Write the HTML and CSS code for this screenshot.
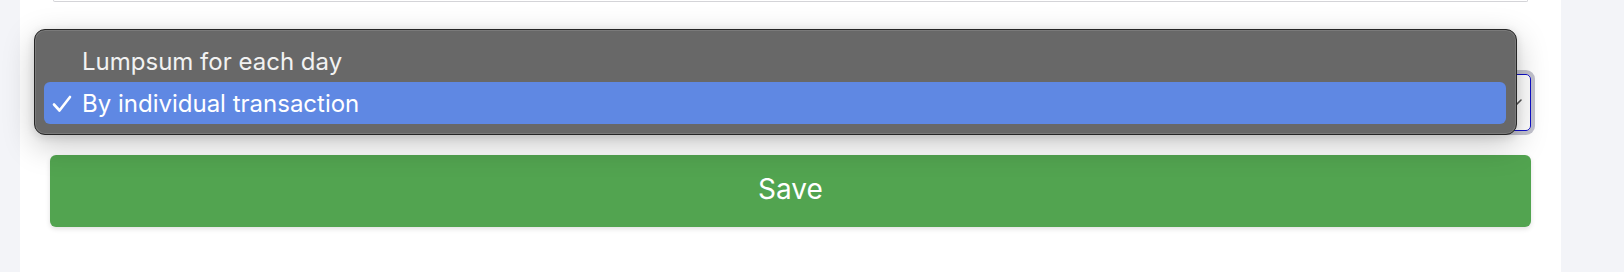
FILE: index.html
```html
<!DOCTYPE html>
<html lang="en">
<head>
<meta charset="utf-8">
<title>Settings</title>
<link rel="stylesheet" href="styles.css">
</head>
<body>
<div class="page">
  <div class="card">
    <div class="input-tail"></div>
    <div class="select-wrap">
      <div class="select">
        <svg class="chevron" width="14" height="8" viewBox="0 0 14 8"><path d="M1 1 L7 7 L13 1" fill="none" stroke="#555" stroke-width="1.6" stroke-linecap="round" stroke-linejoin="round"/></svg>
      </div>
      <div class="menu">
        <div class="menu-item">Lumpsum for each day</div>
        <div class="menu-item selected">
          <svg class="check" width="20" height="18" viewBox="0 0 20 18"><path d="M2 9.5 L7.5 15.5 L18 2" fill="none" stroke="#fff" stroke-width="2.6" stroke-linecap="round" stroke-linejoin="round"/></svg>
          By individual transaction
        </div>
      </div>
    </div>
    <button class="save">Save</button>
  </div>
</div>
</body>
</html>
```

FILE: styles.css
```css
* { box-sizing: border-box; }
html, body { margin: 0; padding: 0; }
body {
  background: #f3f4f8;
  font-family: Inter, "Noto Sans", "Liberation Sans", sans-serif;
  height: 272px;
  overflow: hidden;
}
.page {
  display: flex;
  padding: 0 63px 0 20px;
  height: 272px;
}
.card {
  flex: 1;
  background: #ffffff;
  display: flex;
  flex-direction: column;
  padding: 0 30px;
}
.input-tail {
  height: 2px;
  margin: 0 3px;
  border: 1px solid #d4d4d8;
  border-top: none;
  border-radius: 0 0 6px 6px;
}
.select-wrap {
  position: relative;
  margin-top: 72px;
}
.select {
  height: 57px;
  border: 1px solid #1010c8;
  border-radius: 5px;
  box-shadow: 0 0 0 4px #c3c3ce;
  display: flex;
  align-items: center;
  justify-content: flex-end;
  padding: 0 8px 0 16px;
}
.chevron { display: block; }
.menu {
  position: absolute;
  left: -16px;
  top: -45px;
  width: 1483px;
  height: 106px;
  background: #686868;
  border: 1px solid #262626;
  border-radius: 11px;
  box-shadow: inset 0 0 0 1px rgba(255,255,255,0.12), 0 10px 32px rgba(0,0,0,0.22), 0 2px 8px rgba(0,0,0,0.12);
  padding: 10px 10px 10px 9px;
  display: flex;
  flex-direction: column;
}
.menu-item {
  height: 42px;
  display: flex;
  align-items: center;
  padding-left: 38px;
  position: relative;
  color: #f2f2f2;
  font-size: 24px;
  border-radius: 6px;
}
.menu-item.selected {
  background: #5f88e3;
  color: #ffffff;
}
.check {
  position: absolute;
  left: 8px;
  top: 13px;
}
.save {
  margin-top: 24px;
  height: 72px;
  border: none;
  border-radius: 6px;
  background: #52a450;
  color: #ffffff;
  font-family: Inter, "Noto Sans", "Liberation Sans", sans-serif;
  font-size: 28px;
  font-weight: 400;
  box-shadow: 0 2px 5px rgba(0,0,0,0.12);
  padding: 0;
  padding-bottom: 5px;
}
```
